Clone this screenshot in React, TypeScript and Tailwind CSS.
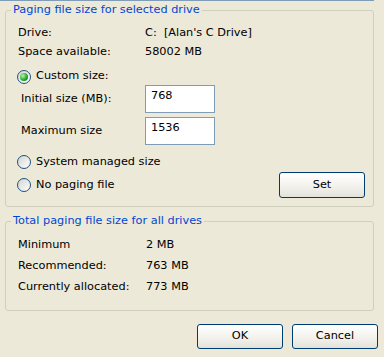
import React from 'react';

const font = "font-['DejaVu_Sans',sans-serif] text-[11.3px]";

function Radio({ checked, label }: { checked?: boolean; label: string }) {
  return (
    <div className="flex items-center">
      <div className="w-[14px] h-[14px] rounded-full border border-[#1C5180] bg-linear-to-br from-[#D4D4CE] to-white flex items-center justify-center">
        {checked && (
          <div className="w-[8px] h-[8px] rounded-full bg-[radial-gradient(circle_at_35%_35%,#b4f5b4,#21a121_60%,#137c13)]" />
        )}
      </div>
      <span className="ml-[5px]">{label}</span>
    </div>
  );
}

function XpButton({ label, w, h }: { label: string; w: string; h: string }) {
  return (
    <button
      className={`${w} ${h} rounded-[3px] border border-[#003C74] bg-linear-to-b from-white via-[#F4F3EE] to-[#E3E2DA] text-black`}
    >
      {label}
    </button>
  );
}

function GroupBox({
  title,
  className,
  children,
}: {
  title: string;
  className: string;
  children: React.ReactNode;
}) {
  return (
    <div className={`relative mx-[5px] w-[369px] border border-[#D0D0BF] rounded-[3px] ${className}`}>
      <span className="absolute -top-[8px] left-[5px] px-[2px] bg-[#ECE9D8] text-[#0046D5] leading-[14px]">
        {title}
      </span>
      {children}
    </div>
  );
}

function TextBox({ value }: { value: string }) {
  return (
    <div className="w-[70px] h-[28px] border border-[#7F9DB9] bg-white pl-[5px] pt-[3px] leading-[14px]">
      {value}
    </div>
  );
}

export default function App() {
  return (
    <div className={`w-[384px] h-[357px] bg-[#ECE9D8] text-black overflow-hidden ${font}`}>
      <div className="h-px w-[374px] bg-[#7F9DB9]" />

      {/* Paging file size for selected drive */}
      <GroupBox title="Paging file size for selected drive" className="mt-[9px] pt-[13px] pl-[12px] pr-[8px] pb-[8px]">
        <div className="grid grid-cols-[127px_1fr]">
          <div className="h-[19px] flex items-center">Drive:</div>
          <div className="h-[19px] flex items-center whitespace-pre">C:  [Alan's C Drive]</div>
          <div className="h-[19px] flex items-center">Space available:</div>
          <div className="h-[19px] flex items-center">58002 MB</div>
        </div>

        <div className="mt-[6px] h-[17px] flex items-center -ml-px">
          <Radio checked label="Custom size:" />
        </div>

        <div className="grid grid-cols-[127px_1fr] gap-y-[4px]">
          <div className="h-[28px] flex items-center pl-[3px]">Initial size (MB):</div>
          <TextBox value="768" />
          <div className="h-[28px] flex items-center pl-[3px]">Maximum size</div>
          <TextBox value="1536" />
        </div>

        <div className="mt-[8px] h-[18px] flex items-center -ml-px">
          <Radio label="System managed size" />
        </div>

        <div className="mt-px h-[26px] flex items-center justify-between -ml-px">
          <Radio label="No paging file" />
          <XpButton label="Set" w="w-[86px]" h="h-[26px]" />
        </div>
      </GroupBox>

      {/* Total paging file size for all drives */}
      <GroupBox title="Total paging file size for all drives" className="mt-[14px] pt-[13px] pl-[12px] pb-[12px]">
        <div className="grid grid-cols-[128px_1fr]">
          <div className="h-[21px] flex items-center">Minimum</div>
          <div className="h-[21px] flex items-center">2 MB</div>
          <div className="h-[21px] flex items-center">Recommended:</div>
          <div className="h-[21px] flex items-center">763 MB</div>
          <div className="h-[21px] flex items-center">Currently allocated:</div>
          <div className="h-[21px] flex items-center">773 MB</div>
        </div>
      </GroupBox>

      <div className="mt-[13px] flex justify-end gap-[9px] pr-[6px]">
        <XpButton label="OK" w="w-[86px]" h="h-[25px]" />
        <XpButton label="Cancel" w="w-[86px]" h="h-[25px]" />
      </div>
    </div>
  );
}
